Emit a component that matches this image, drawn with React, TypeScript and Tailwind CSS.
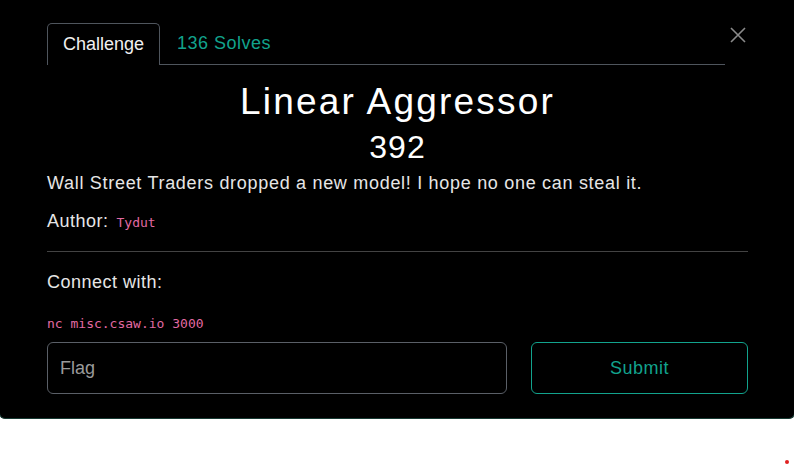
import React, { useState } from 'react';

export default function App() {
  const [flag, setFlag] = useState('');

  return (
    <div className="w-full bg-white overflow-hidden" style={{ fontFamily: '"Liberation Sans", Arial, sans-serif' }}>
      <div className="-mx-px h-[419px] bg-black border border-t-0 border-[#173a33] rounded-b-[6px] relative">
        <div className="pl-[47px] pr-[46px] pt-[23px]">
          {/* Tabs */}
          <div className="flex items-end h-[42px] mr-[23px] border-b border-[#4f555d]">
            <div className="h-[42px] px-[15px] flex items-center border border-b-0 border-[#4f555d] rounded-t-[5px] text-[18px] text-[#f0f0f0] bg-black -mb-px">
              Challenge
            </div>
            <div className="h-[41px] px-[17px] flex items-center text-[18px] tracking-[0.5px] text-[#12a38d]">136 Solves</div>
          </div>

          {/* Title */}
          <div className="mt-[18px] text-center text-white leading-none">
            <div className="text-[37px] tracking-[2.2px]">Linear Aggressor</div>
            <div className="text-[32px] mt-[11px] tracking-[1px]">392</div>
          </div>

          <p className="mt-[8px] text-[18px] tracking-[0.7px] text-[#e6e6e6] leading-[24px]">
            Wall Street Traders dropped a new model! I hope no one can steal it.
          </p>

          <div className="mt-[14px] flex items-baseline gap-[8px] text-[18px] tracking-[0.5px] text-[#e6e6e6] leading-[24px]">
            <span>Author:</span>
            <span className="text-[13px] tracking-normal text-[#e26aa3]" style={{ fontFamily: '"DejaVu Sans Mono", "Liberation Mono", monospace' }}>
              Tydut
            </span>
          </div>

          <div className="mt-[16px] h-px bg-[#434343]" />

          <div className="mt-[18px] text-[18px] tracking-[0.5px] text-[#e6e6e6] leading-[24px]">Connect with:</div>

          <div
            className="mt-[21px] text-[13px] text-[#e26aa3] leading-[18px]"
            style={{ fontFamily: '"DejaVu Sans Mono", "Liberation Mono", monospace' }}
          >
            nc misc.csaw.io 3000
          </div>

          <div className="mt-[9px] flex gap-[24px]">
            <input
              value={flag}
              onChange={e => setFlag(e.target.value)}
              placeholder="Flag"
              className="w-[460px] h-[52px] px-[12px] bg-black border border-[#5a5f67] rounded-[6px] text-[18px] text-white placeholder:text-[#9a9a9a] outline-none"
            />
            <button className="flex-1 h-[52px] border border-[#12a38d] rounded-[6px] text-[18px] tracking-[0.5px] text-[#12a38d] bg-black">
              Submit
            </button>
          </div>
        </div>

        {/* Close */}
        <button className="absolute left-[729px] top-[26px] w-[18px] h-[18px] flex items-center justify-center text-[#8a8a8a]">
          <svg width="18" height="18" viewBox="0 0 18 18" fill="none" stroke="currentColor" strokeWidth="1.6">
            <path d="M2 2 L16 16 M16 2 L2 16" />
          </svg>
        </button>
      </div>
      <div className="h-[51px] relative">
        <div className="absolute left-[785px] top-[41px] w-[4px] h-[4px] rounded-full bg-[#e02020]" />
      </div>
    </div>
  );
}
